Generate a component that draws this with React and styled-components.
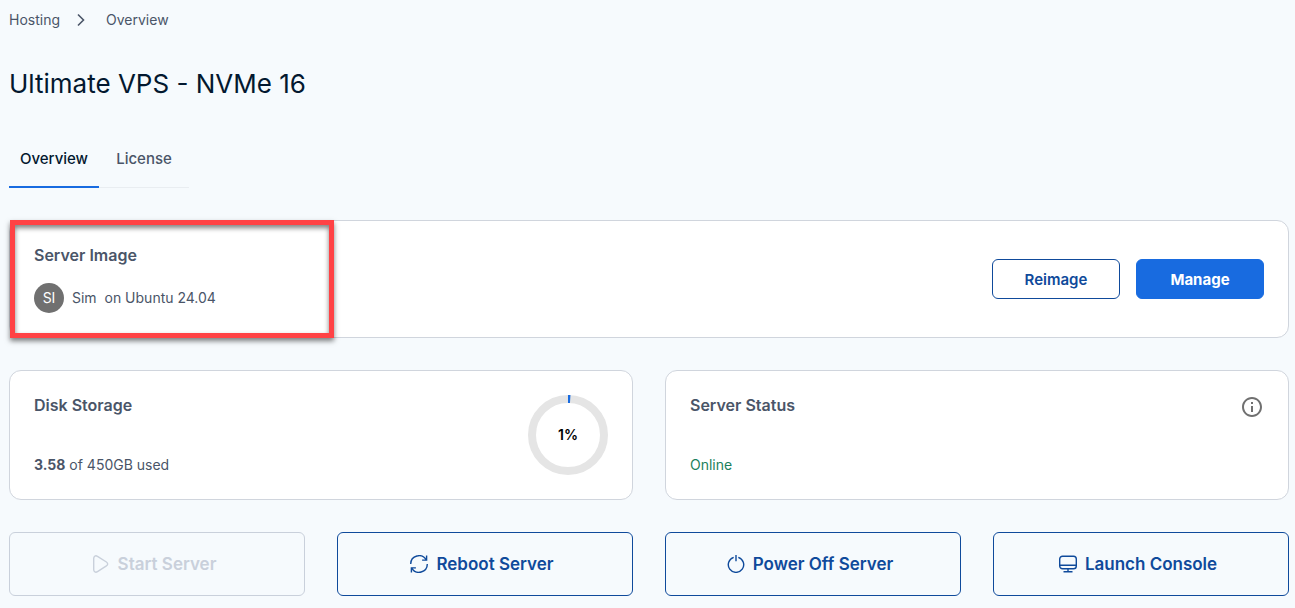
import React from 'react';
import styled, { createGlobalStyle } from 'styled-components';
import { MdInfoOutline } from 'react-icons/md';

const GlobalStyle = createGlobalStyle`
    *{
        box-sizing:border-box;
    }
    body{
        margin:0;
        background-color:#f6fafd;
        font-family:Inter, "Liberation Sans", sans-serif;
        font-size:14px;
        line-height:20px;
        color:#4a5568;
    }
    h1, h2, p{
        margin:0;
    }
    button{
        font-family:inherit;
        cursor:pointer;
    }
`;

const StyledPage = styled.main`
    display:flex;
    flex-direction:column;
    gap:32px;
    padding:8px 6px 12px 9px;
`;
const StyledBreadcrumb = styled.nav`
    display:flex;
    align-items:center;
    height:24px;
    a{
        color:#4a5568;
        text-decoration:none;
    }
    svg{
        margin:0 20px 0 16px;
    }
`;
const StyledPageTitle = styled.h1`
    font-weight:400;
    font-size:26px;
    line-height:40px;
    color:#03182f;
`;
const StyledTabs = styled.div`
    display:flex;
    width:fit-content;
    box-shadow:inset 0 -1px 0 #e9edf1;
`;
const StyledTab = styled.button`
    width:90px;
    padding:12px 0 16px;
    border:none;
    border-bottom:2px solid ${({ $active }) => $active ? '#186be0' : 'transparent'};
    background-color:transparent;
    font-weight:500;
    font-size:15px;
    line-height:22px;
    color:${({ $active }) => $active ? '#03182f' : '#4a5568'};
`;
const StyledCard = styled.section`
    position:relative;
    display:flex;
    justify-content:space-between;
    padding:24px;
    border:1px solid #d0d5dd;
    border-radius:12px;
    background-color:#ffffff;
`;
const StyledCardBody = styled.div`
    display:flex;
    flex-direction:column;
    justify-content:space-between;
    gap:18px;
    min-height:${({ $tall }) => $tall ? '80px' : '0'};
`;
const StyledCardTitle = styled.h2`
    font-weight:600;
    font-size:16px;
    line-height:20px;
`;
const StyledHighlight = styled.div`
    position:absolute;
    top:-1px;
    bottom:-1px;
    left:0;
    width:324px;
    border:5px solid #ff4245;
    box-shadow:0 3px 5px rgba(0,0,0,0.5), inset 0 3px 5px rgba(0,0,0,0.5);
    pointer-events:none;
`;
const StyledImageInfo = styled.div`
    display:flex;
    align-items:center;
    gap:8px;
    white-space:pre;
`;
const StyledAvatar = styled.span`
    display:flex;
    align-items:center;
    justify-content:center;
    width:30px;
    height:30px;
    border-radius:50%;
    background-color:#707070;
    color:#ffffff;
`;
const StyledCardButtons = styled.div`
    display:flex;
    align-items:center;
    gap:16px;
`;
const StyledButton = styled.button`
    width:128px;
    height:40px;
    border:1px solid ${({ $primary }) => $primary ? '#186be0' : '#0f4a9b'};
    border-radius:6px;
    background-color:${({ $primary }) => $primary ? '#186be0' : '#ffffff'};
    font-weight:${({ $primary }) => $primary ? '700' : '600'};
    font-size:15px;
    color:${({ $primary }) => $primary ? '#ffffff' : '#0f4a9b'};
`;
const StyledStats = styled.div`
    display:grid;
    grid-template-columns:repeat(2,1fr);
    gap:32px;
    @media all and (max-width:700px){
        grid-template-columns:1fr;
    }
`;
const StyledOnline = styled.p`
    color:#1b7f5c;
`;
const StyledDonut = styled.div`
    display:grid;
    place-items:center;
    width:80px;
    height:80px;
    svg, span{
        grid-area:1 / 1;
    }
    span{
        font-weight:600;
        color:#000000;
    }
`;
const StyledInfoButton = styled.button`
    display:flex;
    align-self:flex-start;
    padding:0;
    border:none;
    background-color:transparent;
    color:#707070;
`;
const StyledActions = styled.div`
    display:grid;
    grid-template-columns:repeat(4,1fr);
    gap:32px;
    @media all and (max-width:1000px){
        grid-template-columns:repeat(2,1fr);
    }
`;
const StyledAction = styled.button`
    display:flex;
    align-items:center;
    justify-content:center;
    gap:8px;
    height:64px;
    padding:0 12px 0 6px;
    border:1px solid #0f4a9b;
    border-radius:6px;
    background-color:transparent;
    font-weight:600;
    font-size:17px;
    color:#0f4a9b;
    &:disabled{
        border-color:#c9d0db;
        color:#c9d0db;
        cursor:default;
    }
`;

function Icon({ children }) {
    return (
        <svg width="18" height="18" viewBox="0 0 18 18" fill="none" stroke="currentColor" strokeWidth="1.4" aria-hidden="true">
            {children}
        </svg>
    )
}

function Donut({ percent }) {
    const length = 2 * Math.PI * 36;
    return (
        <StyledDonut>
            <svg width="80" height="80" viewBox="0 0 80 80" fill="none" strokeWidth="8" aria-hidden="true">
                <circle cx="40" cy="40" r="36" stroke="#e5e5e5" />
                <circle cx="40" cy="40" r="36" stroke="#186be0" strokeDasharray={`${length * percent / 100} ${length}`} transform="rotate(-90 40 40)" />
            </svg>
            <span>{percent}%</span>
        </StyledDonut>
    )
}

const actions = [
    {
        label: 'Start Server',
        disabled: true,
        icon: <path d="M1.700 3.500v11c0 2.400 1.900 3.400 3.800 2.100l8.900-5.700c1.700-1.200 1.700-2.700 0-3.900L5.500 1.400C3.600.1 1.700 1.100 1.700 3.500z" />
    },
    {
        label: 'Reboot Server',
        icon: <>
            <path d="M.7 9A8.3 8.3 0 0 1 16.2 4.900M17.3 9A8.3 8.3 0 0 1 1.800 13.100" />
            <path d="M16.6.6v4.500h-4.500M1.400 17.400v-4.500h4.500" />
        </>
    },
    {
        label: 'Power Off Server',
        icon: <path d="M6.700 2.300a7.700 7.700 0 1 0 4.600 0M9 0v6.200" />
    },
    {
        label: 'Launch Console',
        icon: <>
            <rect x=".7" y="1.2" width="16.6" height="12.6" rx="2.8" />
            <path d="M.7 10.300h16.600M9 13.800v3M4.500 16.800h9" />
        </>
    }
];

export default function App() {

    return (
        <>
            <GlobalStyle />
            <StyledPage>
                <StyledBreadcrumb aria-label="Breadcrumb">
                    <a href="#hosting">Hosting</a>
                    <svg width="10" height="14" viewBox="0 0 10 14" fill="none" stroke="currentColor" strokeWidth="1.6" aria-hidden="true">
                        <path d="M2 1.500 7.500 7 2 12.500" />
                    </svg>
                    <a href="#overview">Overview</a>
                </StyledBreadcrumb>
                <StyledPageTitle>Ultimate VPS - NVMe 16</StyledPageTitle>
                <StyledTabs role="tablist">
                    <StyledTab role="tab" aria-selected="true" $active>Overview</StyledTab>
                    <StyledTab role="tab" aria-selected="false">License</StyledTab>
                </StyledTabs>
                <StyledCard>
                    <StyledCardBody>
                        <StyledCardTitle>Server Image</StyledCardTitle>
                        <StyledImageInfo>
                            <StyledAvatar>SI</StyledAvatar>
                            <p>{'Sim  on Ubuntu 24.04'}</p>
                        </StyledImageInfo>
                    </StyledCardBody>
                    <StyledCardButtons>
                        <StyledButton>Reimage</StyledButton>
                        <StyledButton $primary>Manage</StyledButton>
                    </StyledCardButtons>
                    <StyledHighlight />
                </StyledCard>
                <StyledStats>
                    <StyledCard>
                        <StyledCardBody $tall>
                            <StyledCardTitle>Disk Storage</StyledCardTitle>
                            <p><strong>3.58</strong> of 450GB used</p>
                        </StyledCardBody>
                        <Donut percent={1} />
                    </StyledCard>
                    <StyledCard>
                        <StyledCardBody $tall>
                            <StyledCardTitle>Server Status</StyledCardTitle>
                            <StyledOnline>Online</StyledOnline>
                        </StyledCardBody>
                        <StyledInfoButton aria-label="Server status info">
                            <MdInfoOutline size={24} />
                        </StyledInfoButton>
                    </StyledCard>
                </StyledStats>
                <StyledActions>
                    {actions.map(action =>
                        <StyledAction key={action.label} disabled={action.disabled}>
                            <Icon>{action.icon}</Icon>
                            {action.label}
                        </StyledAction>
                    )}
                </StyledActions>
            </StyledPage>
        </>
    )
}
